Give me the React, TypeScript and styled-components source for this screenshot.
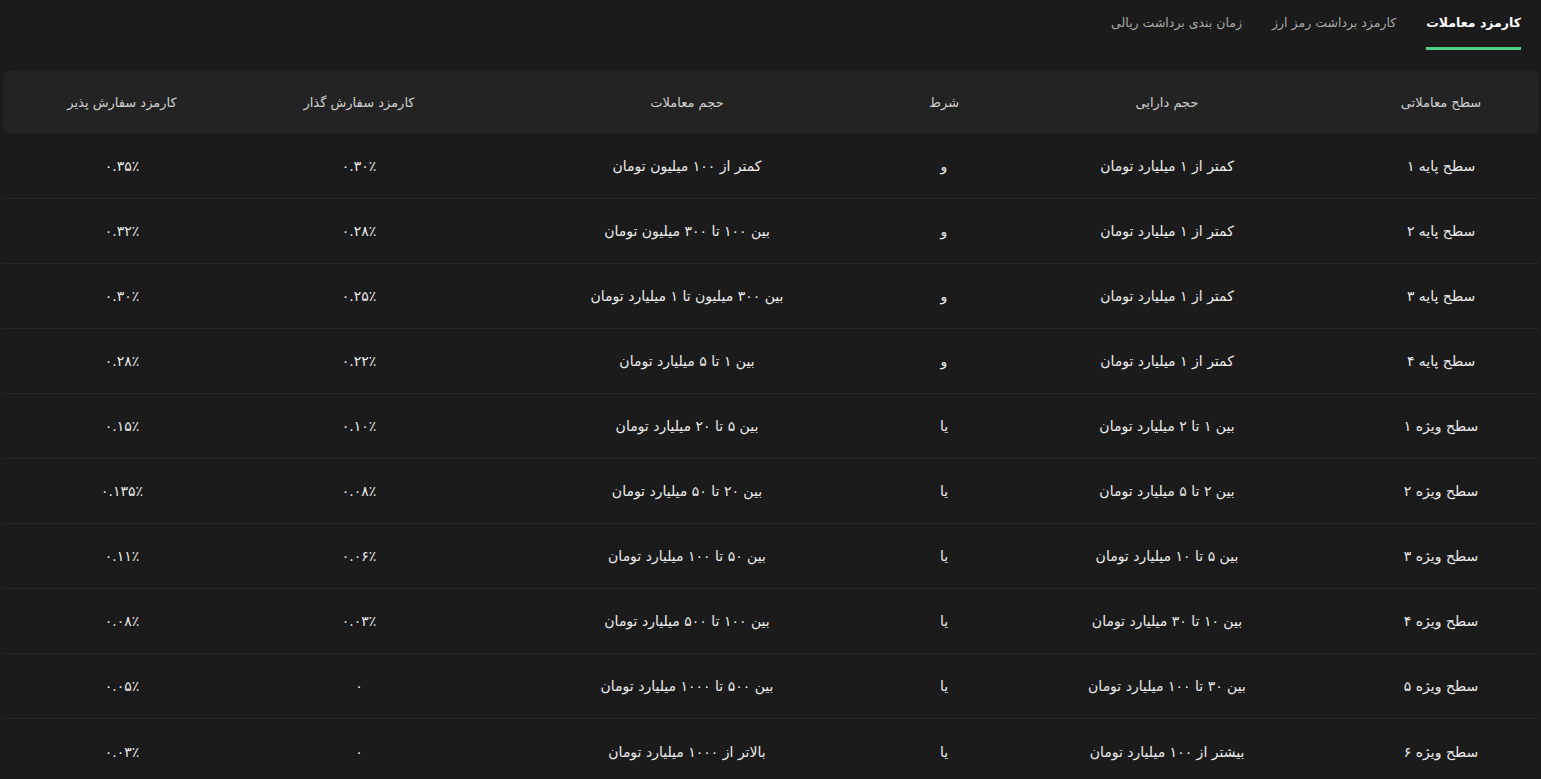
import styled, { createGlobalStyle } from 'styled-components';

const Global = createGlobalStyle`
    body {
        margin: 0;
        background: #1b1b1b;
        font-family: "DejaVu Sans", "Noto Sans", sans-serif;
        color: #e8e8e8;
    }
    * { box-sizing: border-box; }
`;

const Page = styled.div`
    direction: rtl;
    padding: 0 2px 0 3px;
`;

const Tabs = styled.div`
    display: flex;
    gap: 30px;
    padding: 0 18px 0 0;
    height: 50px;
`;

const Tab = styled.div<{ $active?: boolean }>`
    font-size: 12.5px;
    font-weight: ${({ $active }) => ($active ? 700 : 400)};
    color: ${({ $active }) => ($active ? '#ffffff' : '#a8a8a8')};
    padding-top: 15px;
    height: 50px;
    border-bottom: 3px solid ${({ $active }) => ($active ? '#4fd18b' : 'transparent')};
`;

const Table = styled.div`
    margin-top: 20px;
`;

const cols = '196px 352px 94px 420px 236px 1fr';

const HeadRow = styled.div`
    display: grid;
    grid-template-columns: ${cols};
    height: 64px;
    align-items: center;
    background: #232323;
    border-radius: 8px;
    font-size: 13px;
    color: #cfcfcf;
`;

const Row = styled.div<{ $last?: boolean }>`
    display: grid;
    grid-template-columns: ${cols};
    height: 65px;
    align-items: center;
    border-bottom: ${({ $last }) => ($last ? 'none' : '1px solid #262626')};
    font-size: 14px;
    color: #ececec;
`;

const Cell = styled.div`
    text-align: center;
`;

const heads = ['سطح معاملاتی', 'حجم دارایی', 'شرط', 'حجم معاملات', 'کارمزد سفارش گذار', 'کارمزد سفارش پذیر'];

const rows = [
    ['سطح پایه ۱', 'کمتر از ۱ میلیارد تومان', 'و', 'کمتر از ۱۰۰ میلیون تومان', '۰.۳۰٪', '۰.۳۵٪'],
    ['سطح پایه ۲', 'کمتر از ۱ میلیارد تومان', 'و', 'بین ۱۰۰ تا ۳۰۰ میلیون تومان', '۰.۲۸٪', '۰.۳۲٪'],
    ['سطح پایه ۳', 'کمتر از ۱ میلیارد تومان', 'و', 'بین ۳۰۰ میلیون تا ۱ میلیارد تومان', '۰.۲۵٪', '۰.۳۰٪'],
    ['سطح پایه ۴', 'کمتر از ۱ میلیارد تومان', 'و', 'بین ۱ تا ۵ میلیارد تومان', '۰.۲۲٪', '۰.۲۸٪'],
    ['سطح ویژه ۱', 'بین ۱ تا ۲ میلیارد تومان', 'یا', 'بین ۵ تا ۲۰ میلیارد تومان', '۰.۱۰٪', '۰.۱۵٪'],
    ['سطح ویژه ۲', 'بین ۲ تا ۵ میلیارد تومان', 'یا', 'بین ۲۰ تا ۵۰ میلیارد تومان', '۰.۰۸٪', '۰.۱۳۵٪'],
    ['سطح ویژه ۳', 'بین ۵ تا ۱۰ میلیارد تومان', 'یا', 'بین ۵۰ تا ۱۰۰ میلیارد تومان', '۰.۰۶٪', '۰.۱۱٪'],
    ['سطح ویژه ۴', 'بین ۱۰ تا ۳۰ میلیارد تومان', 'یا', 'بین ۱۰۰ تا ۵۰۰ میلیارد تومان', '۰.۰۳٪', '۰.۰۸٪'],
    ['سطح ویژه ۵', 'بین ۳۰ تا ۱۰۰ میلیارد تومان', 'یا', 'بین ۵۰۰ تا ۱۰۰۰ میلیارد تومان', '۰', '۰.۰۵٪'],
    ['سطح ویژه ۶', 'بیشتر از ۱۰۰ میلیارد تومان', 'یا', 'بالاتر از ۱۰۰۰ میلیارد تومان', '۰', '۰.۰۳٪'],
];

export default function App() {
    return (
        <Page>
            <Global />
            <Tabs>
                <Tab $active>کارمزد معاملات</Tab>
                <Tab>کارمزد برداشت رمز ارز</Tab>
                <Tab>زمان بندی برداشت ریالی</Tab>
            </Tabs>
            <Table>
                <HeadRow>
                    {heads.map((h) => (
                        <Cell key={h}>{h}</Cell>
                    ))}
                </HeadRow>
                {rows.map((r, i) => (
                    <Row key={r[0]} $last={i === rows.length - 1}>
                        {r.map((c, j) => (
                            <Cell key={j}>{c}</Cell>
                        ))}
                    </Row>
                ))}
            </Table>
        </Page>
    );
}
